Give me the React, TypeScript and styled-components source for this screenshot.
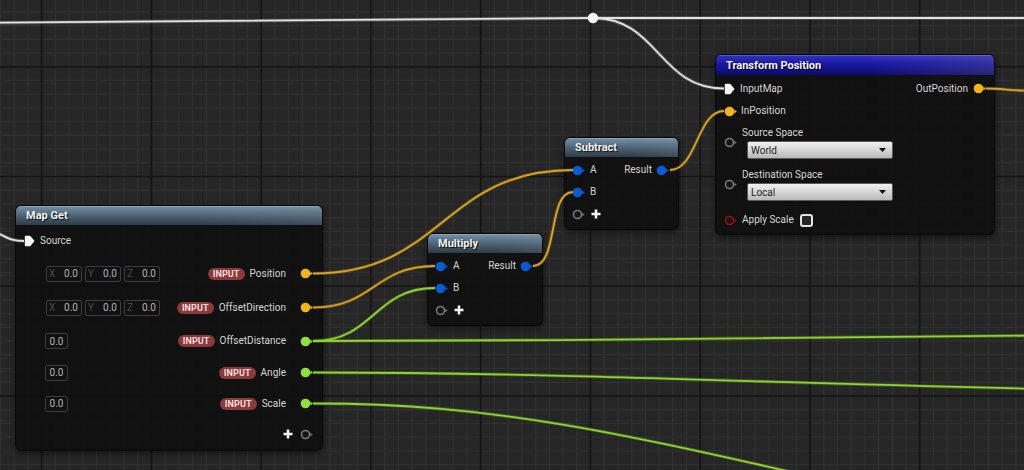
import { ReactNode } from 'react';
import styled, { createGlobalStyle } from 'styled-components';

const GlobalStyle = createGlobalStyle`
  html, body {
    margin: 0;
    padding: 0;
    background: #262626;
  }
  body {
    font-family: Roboto, "Noto Sans", "Liberation Sans", sans-serif;
  }
`;

const YELLOW = '#f2b515';
const BLUE = '#0a5ad6';
const GREEN = '#8ee03a';

const W = 1024;
const H = 470;
const MINOR = 13.72;

const Canvas = styled.div`
  position: relative;
  width: ${W}px;
  height: ${H}px;
  overflow: hidden;
  background: #262626;
`;

const Layer = styled.svg<{ $front?: boolean }>`
  position: absolute;
  left: 0;
  top: 0;
  pointer-events: none;
  z-index: ${(p) => (p.$front ? 2 : 0)};
`;

const Node = styled.div<{ $x: number; $y: number; $w: number }>`
  position: absolute;
  z-index: 1;
  left: ${(p) => p.$x}px;
  top: ${(p) => p.$y}px;
  width: ${(p) => p.$w}px;
  box-sizing: border-box;
  border: 1px solid #070707;
  border-radius: 6px;
  background: rgba(14, 16, 14, 0.9);
  box-shadow: 0 2px 6px rgba(0, 0, 0, 0.55);
  overflow: hidden;
`;

const Header = styled.div<{ $tone: 'steel' | 'blue'; $h: number }>`
  height: ${(p) => p.$h}px;
  display: flex;
  align-items: center;
  padding-left: 10px;
  font-size: 11px;
  font-weight: 700;
  color: #f2f2f2;
  text-shadow: 1px 1px 1px rgba(0, 0, 0, 0.85);
  box-shadow: inset 0 1px 0 rgba(255, 255, 255, 0.18);
  background: ${(p) =>
    p.$tone === 'blue'
      ? 'linear-gradient(90deg, rgba(0,0,0,0) 55%, rgba(120,120,150,0.25) 100%), linear-gradient(180deg, #3434c4 0%, #1b1ba6 40%, #0b0b6a 100%)'
      : 'linear-gradient(90deg, rgba(0,0,0,0) 60%, rgba(140,150,160,0.15) 100%), linear-gradient(180deg, #7491a8 0%, #52697b 45%, #2e3b45 100%)'};
`;

const Body = styled.div<{ $pad: string }>`
  display: flex;
  flex-direction: column;
  padding: ${(p) => p.$pad};
`;

const Row = styled.div<{ $h: number; $mt?: number }>`
  height: ${(p) => p.$h}px;
  margin-top: ${(p) => p.$mt ?? 0}px;
  display: flex;
  align-items: center;
  gap: 5px;
`;

const Right = styled.div<{ $gap?: number }>`
  margin-left: auto;
  display: flex;
  align-items: center;
  gap: ${(p) => p.$gap ?? 5}px;
`;

const Label = styled.span`
  font-size: 10px;
  color: #d6d6d6;
  white-space: nowrap;
  line-height: 12px;
`;

const Badge = styled.span`
  height: 12px;
  padding: 0 5px;
  border-radius: 6px;
  background: #8a3a3a;
  color: #f3dcdc;
  font-size: 9px;
  font-weight: 700;
  line-height: 12px;
  letter-spacing: 0.1px;
`;

const Fields = styled.div<{ $ml: number }>`
  display: flex;
  gap: 3px;
  margin-left: ${(p) => p.$ml}px;
`;

const Field = styled.div<{ $w: number }>`
  width: ${(p) => p.$w}px;
  height: 16px;
  box-sizing: border-box;
  border: 1px solid #3d3d3d;
  border-radius: 2px;
  display: flex;
  align-items: center;
  justify-content: space-between;
  padding: 0 3px 0 2px;
  font-size: 10px;
  color: #b4b4b4;
`;

const Axis = styled.span`
  color: #4c4c4c;
`;

const ParamBlock = styled.div<{ $mt: number }>`
  margin-top: ${(p) => p.$mt}px;
  display: flex;
  align-items: center;
  gap: 5px;
`;

const ParamCol = styled.div`
  display: flex;
  flex-direction: column;
`;

const ParamLabel = styled(Label)`
  height: 14px;
  line-height: 14px;
`;

const Select = styled.div`
  margin: 1px 0 0 5px;
  width: 146px;
  height: 18px;
  box-sizing: border-box;
  border: 1px solid #5a5a5a;
  border-radius: 2px;
  background: linear-gradient(180deg, #f0f0f0 0%, #d6d6d6 50%, #b8b8b8 100%);
  display: flex;
  align-items: center;
  justify-content: space-between;
  padding: 0 6px 0 3px;
  font-size: 10px;
  color: #1c1c1c;
`;

const Check = styled.div`
  width: 13px;
  height: 13px;
  box-sizing: border-box;
  margin-left: 1px;
  border: 2px solid #e4e4e4;
  border-radius: 3px;
  background: #262626;
`;

const Icon = styled.svg`
  flex: none;
  display: block;
`;

function DataPin({ color }: { color: string }) {
  return (
    <Icon width="13" height="11" viewBox="0 0 13 11">
      <circle cx="5.5" cy="5.5" r="4.8" fill={color} />
      <path d="M10.3 3.6 L12.9 5.5 L10.3 7.4 Z" fill={color} />
    </Icon>
  );
}

function HollowPin({ color }: { color: string }) {
  return (
    <Icon width="13" height="11" viewBox="0 0 13 11">
      <circle cx="5.5" cy="5.5" r="4" fill="#151515" stroke={color} strokeWidth="1.6" />
      <path d="M10.3 3.8 L12.6 5.5 L10.3 7.2 Z" fill={color} />
    </Icon>
  );
}

function ExecPin() {
  return (
    <Icon width="11" height="12" viewBox="0 0 11 12">
      <path d="M1.5 0.8 H5.6 Q6.2 0.8 6.6 1.3 L10.2 5.4 Q10.6 6 10.2 6.6 L6.6 10.7 Q6.2 11.2 5.6 11.2 H1.5 Q0.8 11.2 0.8 10.5 V1.5 Q0.8 0.8 1.5 0.8 Z" fill="#f4f4f4" />
    </Icon>
  );
}

function Plus() {
  return (
    <Icon width="10" height="10" viewBox="0 0 10 10">
      <path d="M5 0.5 V9.5 M0.5 5 H9.5" stroke="#f4f4f4" strokeWidth="2.6" />
    </Icon>
  );
}

function Caret() {
  return (
    <Icon width="7" height="4" viewBox="0 0 7 4">
      <path d="M0 0 H7 L3.5 4 Z" fill="#111" />
    </Icon>
  );
}

function Vec() {
  return (
    <Fields $ml={22}>
      {['X', 'Y', 'Z'].map((a) => (
        <Field key={a} $w={36}>
          <Axis>{a}</Axis>
          <span>0.0</span>
        </Field>
      ))}
    </Fields>
  );
}

function Num() {
  return (
    <Fields $ml={21}>
      <Field $w={23} style={{ justifyContent: 'center', padding: 0 }}>
        0.0
      </Field>
    </Fields>
  );
}

function InputPin({
  h,
  name,
  color,
  children,
}: {
  h: number;
  name: string;
  color: string;
  children: ReactNode;
}) {
  return (
    <Row $h={h}>
      {children}
      <Right>
        <Badge>INPUT</Badge>
        <Label>{name}</Label>
        <span style={{ width: 4 }} />
        <DataPin color={color} />
      </Right>
    </Row>
  );
}

function MathNode({ x, y, w, title }: { x: number; y: number; w: number; title: string }) {
  return (
    <Node $x={x} $y={y} $w={w}>
      <Header $tone="steel" $h={19}>
        {title}
      </Header>
      <Body $pad="2px 9px 4px 7px">
        <Row $h={22}>
          <DataPin color={BLUE} />
          <Label>A</Label>
          <Right $gap={4}>
            <Label>Result</Label>
            <DataPin color={BLUE} />
          </Right>
        </Row>
        <Row $h={22}>
          <DataPin color={BLUE} />
          <Label>B</Label>
        </Row>
        <Row $h={22} style={{ gap: 6 }}>
          <HollowPin color="#7a7a7a" />
          <Plus />
        </Row>
      </Body>
    </Node>
  );
}

// grid + wires drawn on the canvas
function gridLines() {
  const minor: JSX.Element[] = [];
  const major: JSX.Element[] = [];
  for (let k = 0; k * MINOR < W + 20; k++) {
    const x = 0.5 + k * MINOR;
    const isMajor = k % 8 === 3;
    (isMajor ? major : minor).push(
      <line key={'v' + k} x1={x} y1={0} x2={x} y2={H} stroke={isMajor ? '#141414' : '#303030'} strokeWidth={isMajor ? 1.6 : 1.4} />
    );
  }
  for (let k = 0; k * MINOR < H + 20; k++) {
    const y = -1.9 + k * MINOR;
    const isMajor = k % 8 === 5;
    (isMajor ? major : minor).push(
      <line key={'h' + k} x1={0} y1={y} x2={W} y2={y} stroke={isMajor ? '#141414' : '#303030'} strokeWidth={isMajor ? 1.6 : 1.4} />
    );
  }
  return [...minor, ...major];
}

function link(x1: number, y1: number, x2: number, y2: number) {
  const t = Math.max((x2 - x1) * 0.5, 26);
  return `M${x1},${y1} C${x1 + t},${y1} ${x2 - t},${y2} ${x2},${y2}`;
}

const wires: { d: string; c: string }[] = [
  { d: 'M0,22.7 C300,21 450,18 593,18 L1030,18', c: '#e2e2e2' },
  { d: link(593, 18, 724, 88.5), c: '#e2e2e2' },
  { d: 'M-30,228 C4,228 0,241 24,241', c: '#e2e2e2' },
  { d: link(313, 273.5, 573, 170), c: '#d6a421' },
  { d: link(313, 307.5, 435, 266), c: '#d6a421' },
  { d: link(533, 266, 573, 192), c: '#d6a421' },
  { d: link(670, 170, 724, 111), c: '#d6a421' },
  { d: 'M986,88.5 C1005,88.5 1010,91 1040,91', c: '#d6a421' },
  { d: link(313, 341, 435, 288), c: '#8fd42e' },
  { d: 'M313,341 C600,341 800,337 1200,334', c: '#8fd42e' },
  { d: 'M313,372.5 C600,372.5 800,386 1200,392', c: '#8fd42e' },
  { d: 'M313,403.5 C520,403.5 650,440 1000,520', c: '#8fd42e' },
];

export default function App() {
  return (
    <>
      <GlobalStyle />
      <Canvas>
        <Layer width={W} height={H}>
          {gridLines()}
        </Layer>

        <Node $x={15} $y={205} $w={308}>
          <Header $tone="steel" $h={19}>
            Map Get
          </Header>
          <Body $pad="0 9px 1px 8px">
            <Row $h={32}>
              <ExecPin />
              <Label>Source</Label>
            </Row>
            <InputPin h={33} name="Position" color={YELLOW}>
              <Vec />
            </InputPin>
            <InputPin h={35} name="OffsetDirection" color={YELLOW}>
              <Vec />
            </InputPin>
            <InputPin h={32} name="OffsetDistance" color={GREEN}>
              <Num />
            </InputPin>
            <InputPin h={31} name="Angle" color={GREEN}>
              <Num />
            </InputPin>
            <InputPin h={31} name="Scale" color={GREEN}>
              <Num />
            </InputPin>
            <Row $h={30}>
              <Right $gap={7}>
                <Plus />
                <HollowPin color="#7a7a7a" />
              </Right>
            </Row>
          </Body>
        </Node>

        <MathNode x={427} y={233} w={116} title="Multiply" />
        <MathNode x={564} y={137} w={115} title="Subtract" />

        <Node $x={715} $y={54} $w={280}>
          <Header $tone="blue" $h={20}>
            Transform Position
          </Header>
          <Body $pad="2px 8px 3px 8px">
            <Row $h={23}>
              <ExecPin />
              <Label>InputMap</Label>
              <Right $gap={5}>
                <Label>OutPosition</Label>
                <DataPin color={YELLOW} />
              </Right>
            </Row>
            <Row $h={22} style={{ gap: 4 }}>
              <DataPin color={YELLOW} />
              <Label>InPosition</Label>
            </Row>
            <ParamBlock $mt={4}>
              <HollowPin color="#7a7a7a" />
              <ParamCol>
                <ParamLabel>Source Space</ParamLabel>
                <Select>
                  World
                  <Caret />
                </Select>
              </ParamCol>
            </ParamBlock>
            <ParamBlock $mt={9}>
              <HollowPin color="#7a7a7a" />
              <ParamCol>
                <ParamLabel>Destination Space</ParamLabel>
                <Select>
                  Local
                  <Caret />
                </Select>
              </ParamCol>
            </ParamBlock>
            <Row $h={22} $mt={8}>
              <HollowPin color="#a01010" />
              <Label>Apply Scale</Label>
              <Check />
            </Row>
          </Body>
        </Node>

        <Layer $front width={W} height={H}>
          {wires.map((w, i) => (
            <g key={i}>
              <path d={w.d} fill="none" stroke={w.c} strokeOpacity={0.25} strokeWidth={3.6} />
              <path d={w.d} fill="none" stroke={w.c} strokeWidth={1.8} />
            </g>
          ))}
          <circle cx={593} cy={18} r={5.2} fill="#f4f4f4" />
        </Layer>
      </Canvas>
    </>
  );
}
